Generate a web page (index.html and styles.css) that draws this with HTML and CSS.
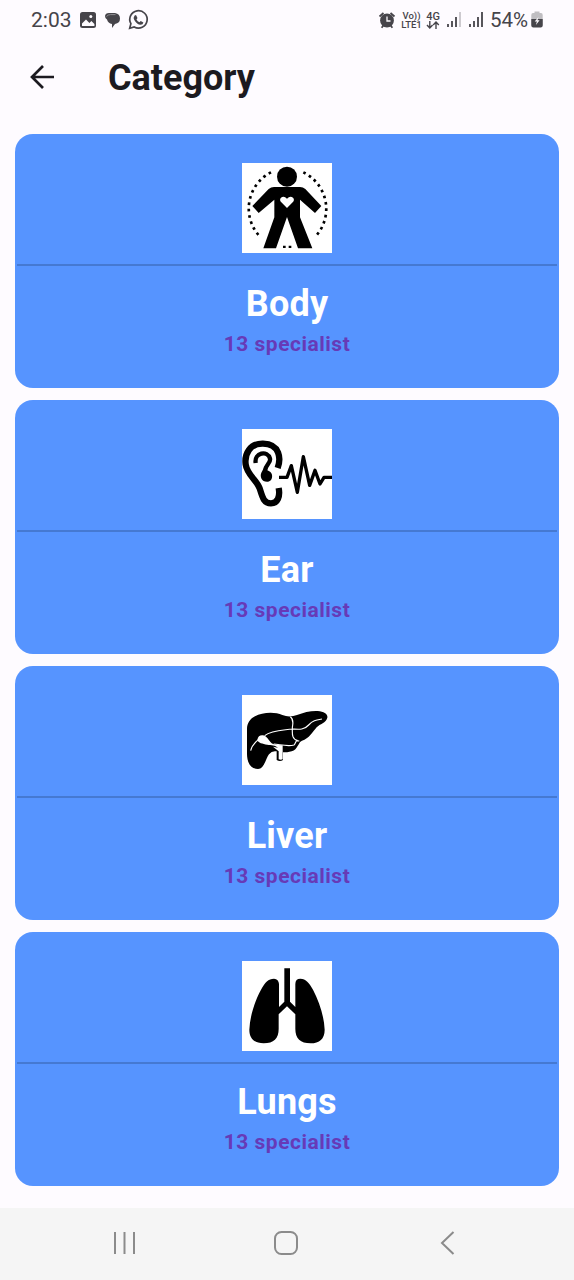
FILE: index.html
```html
<!DOCTYPE html>
<html lang="en">
<head>
<meta charset="utf-8">
<title>Category</title>
<link rel="stylesheet" href="styles.css">
</head>
<body>
<div class="screen">
  <div class="status">
    <span class="clock">2:03</span>
    <svg class="status-left" width="72" height="24" viewBox="0 0 72 24">
      <rect x="2" y="4" width="16" height="16" rx="2.5" fill="#46444a"/>
      <path d="M4 15.5l4-4 3.400 3.400 2-2 3 3v2H4z" fill="#fefbff"/><circle cx="12.800" cy="8.600" r="1.500" fill="#fefbff"/>
      <path d="M31 5h6q5 .8 5 5.500 0 4.500-5 5.500l-3 4v-4q-4-.6-5-4.500Q27 10.500 27 8q.4-3 4-3z" fill="#46444a"/>
      <path d="M28.500 8.500q1.500-1.900 4-1.900h5" fill="none" stroke="#a09ea3" stroke-width=".8"/>
      <path d="M51.700 20.300l1.200-4.600a8.700 8.700 0 1 1 3.300 3.300z" fill="none" stroke="#46444a" stroke-width="1.700"/>
      <path d="M56.600 7.600l1.400-.5 1.500 3-1 1.400q1 2 3 2.700l1.200-1.200 2.700 1.400q-.4 2.400-2.800 2.400-3.700-.4-6.300-4.900-1.200-2.400.3-4.300z" fill="#46444a"/>
    </svg>
    <svg class="alarm" width="18" height="20" viewBox="0 0 18 20">
      <circle cx="9" cy="10.500" r="6.900" fill="#46444a"/>
      <path d="M1.500 6.500l4-3.500M16.500 6.500l-4-3.500M3.600 17.700l2-2.500M14.400 17.700l-2-2.500" stroke="#46444a" stroke-width="1.800"/>
      <path d="M9 6.500v4.500h3.500" fill="none" stroke="#fefbff" stroke-width="1.300"/>
    </svg>
    <span class="volte"><span>Vo))</span><span>LTE1</span></span>
    <span class="net"><span>4G</span>
      <svg width="14" height="8" viewBox="0 0 14 8"><path d="M3.800 0v7M1 4l2.800 3 2.800-3M10 8V1M7.200 4L10 1l2.800 3" fill="none" stroke="#46444a" stroke-width="1.400"/></svg>
    </span>
    <svg class="signals" width="38" height="18" viewBox="0 0 38 18">
      <g stroke="#46444a" stroke-width="1.800"><path d="M2 13v3M6 10v6M10 6v10M24 13v3M28 10v6M32 6v10M36 1v15"/><path d="M14 1v15" stroke="#c8c5ca"/></g>
    </svg>
    <span class="percent">54%</span>
    <svg class="battery" width="12" height="18" viewBox="0 0 12 18">
      <path d="M3.500 2V.5h5V2H10q1.700 0 1.700 2v10H.3V4q0-2 1.700-2z" fill="#c0bec2"/>
      <path d="M.3 8h11.400v6.500q0 2-2 2H2.300q-2 0-2-2z" fill="#46444a"/>
      <path d="M7.500 6L3.700 10.600h2.200L4.900 14l3.700-4.700H6.500z" fill="#fefbff"/>
    </svg>
  </div>

  <div class="appbar">
    <svg class="back" width="28" height="28" viewBox="0 0 28 28"><path d="M26 14H4M15 3L4 14l11 11" fill="none" stroke="#1c1a20" stroke-width="2.700"/></svg>
    <h1 class="title">Category</h1>
  </div>

  <div class="list">
    <div class="card">
      <svg class="picture" viewBox="15 15 270 270">
        <circle cx="150" cy="56" r="30"/>
        <path d="M111 87h78q9 0 16 6l48 51-19 21-45-40v53l37 93h-43l-33-94-33 94H79l33-93v-53l-47 40-19-21 49-51q7-6 16-6z"/>
        <path d="M150 150l-17-17q-7-8-1-14 9-6 18 3 9-9 18-3 6 6-1 14z" fill="#fff"/>
        <path d="M102 43A122 122 0 0 0 70 237M199 43A122 122 0 0 1 234 237" fill="none" stroke="#000" stroke-width="8" stroke-dasharray="8 11.200"/>
        <path d="M138 263h8v7h-8zM155 263h8v7h-8z"/>
      </svg>
      <div class="info"><h2 class="name">Body</h2><p class="count">13 specialist</p></div>
    </div>
    <div class="card">
      <svg class="picture" viewBox="15 15 270 270">
        <g fill="none" stroke="#000">
          <path d="M122 132C132 105 130 60 78 59 38 58 22 91 26 121c4 31 33 47 42 72 8 26 12 45 34 45 20 0 28-20 23-46" stroke-width="19"/>
          <path d="M56 117c-5-31 36-39 43-13 3 13-14 19-14 34" stroke-width="13"/>
          <path d="M126 160h24l13-35 18 80 18-107 19 86 16-45 15 41 12-20h24" stroke-width="10" stroke-linejoin="round"/>
        </g>
        <path d="M80 133c4 4 22 7 25 19 2 14-5 21-15 21-16 0-22-15-17-27z"/>
      </svg>
      <div class="info"><h2 class="name">Ear</h2><p class="count">13 specialist</p></div>
    </div>
    <div class="card">
      <svg class="picture" viewBox="15 15 270 270">
        <path d="M54 79c20-12 59-15 82-4 15 6 30 5 44 0 20-8 42-13 62-12 20 2 31 9 29 20-4 16-22 18-32 29-11 12-23 35-44 40-11 3-12 27-31 32-9 3-18 3-26 3v23q-9 6-19 0v-26q-14-3-23 9c-10 14-15 44-33 44-25 0-33-24-33-45v-75c0-18 10-31 24-38z"/>
        <g fill="none" stroke="#fff" stroke-width="3.500">
          <path d="M160 80c14 10 5 25 6 38 0 14-2 29 16 34M83 137c22-18 58-16 83-20 18 1 35 4 49-12 13-14 24-15 40-18M110 162c22 2 42 8 61 3 4-3 4-8 8-13l8 1M41 182q4-18 24-34"/>
        </g>
        <path d="M61 149q3-14 16-13c13 1 17 15 27 24 5 4 13 5 20 5l13 1v42q-5 2-12 0v-24l-17-14 15 3c-8-8-20-7-32-9-14-3-28-5-30-15z" fill="#fff"/>
      </svg>
      <div class="info"><h2 class="name">Liver</h2><p class="count">13 specialist</p></div>
    </div>
    <div class="card">
      <svg class="picture" viewBox="15 14 270 270">
        <path d="M142 36h17v100l16 16V83q0-16 15-16c17 0 26 12 38 33 19 36 33 79 35 120 0 28-16 41-42 41-31 0-46-15-46-43v-44l-25-24-25 24v44c0 28-15 43-45 43-27 0-43-14-43-41 2-41 16-85 35-120C84 78 94 67 111 67q14 1 15 16v69l16-16z"/>
      </svg>
      <div class="info"><h2 class="name">Lungs</h2><p class="count">13 specialist</p></div>
    </div>
  </div>

  <div class="nav">
    <svg width="24" height="24" viewBox="0 0 24 24"><path d="M2 1v22M11.500 1v22M21 1v22"/></svg>
    <svg width="24" height="24" viewBox="0 0 24 24"><rect x="1" y="1" width="22" height="22" rx="6.500"/></svg>
    <svg width="24" height="24" viewBox="0 0 24 24"><path d="M18.500 1L7 12l11.500 11"/></svg>
  </div>
</div>
</body>
</html>
```
FILE: styles.css
```css
* { box-sizing: border-box; }
body { margin: 0; background: #fefbff; font-family: Roboto, sans-serif; }
h1, h2, p { margin: 0; }
svg { display: block; flex: none; }
.screen { width: 574px; height: 1280px; display: flex; flex-direction: column; overflow: hidden; }

.status { height: 40px; padding: 0 31px 0 31px; display: flex; align-items: center; color: #46444a; }
.clock { width: 47px; font-size: 21px; line-height: 40px; }
.status-left { margin-right: auto; }
.alarm { margin-right: 5px; }
.volte { width: 21px; margin-right: 4px; display: flex; flex-direction: column; align-items: center; font-size: 9.5px; line-height: 9px; font-weight: 500; white-space: nowrap; }
.net { width: 14px; margin-right: 6px; display: flex; flex-direction: column; align-items: center; font-size: 11px; line-height: 9px; font-weight: 500; }
.signals { margin-right: 6px; }
.percent { width: 41px; font-size: 20.5px; line-height: 40px; white-space: nowrap; }

.appbar { height: 94px; padding: 23px 28px 0; display: flex; align-items: flex-start; }
.back { margin-right: 52px; }
.title { font-size: 36px; line-height: 30px; font-weight: 700; color: #1c1a20; white-space: nowrap; }

.list { height: 1074px; padding: 0 15px; display: flex; flex-direction: column; gap: 12.1px; }
.card { height: 254px; flex: none; padding: 29px 2px 0; border-radius: 18px; background: #5694ff; display: flex; flex-direction: column; align-items: center; }
.picture { width: 90px; height: 90px; background: #fff; }
.info { align-self: stretch; margin-top: 11px; padding-top: 16px; border-top: 2px solid #4579d2; text-align: center; }
.name { font-size: 36px; line-height: 44px; font-weight: 700; color: #fff; letter-spacing: .2px; }
.count { font-size: 21px; line-height: 36px; font-weight: 700; color: #673ab7; letter-spacing: .5px; }

.nav { height: 72px; padding: 0 115px 2px 113px; display: flex; align-items: center; justify-content: space-between; background: #f5f5f5; }
.nav svg { fill: none; stroke: #8b8b8b; stroke-width: 2; }
```
